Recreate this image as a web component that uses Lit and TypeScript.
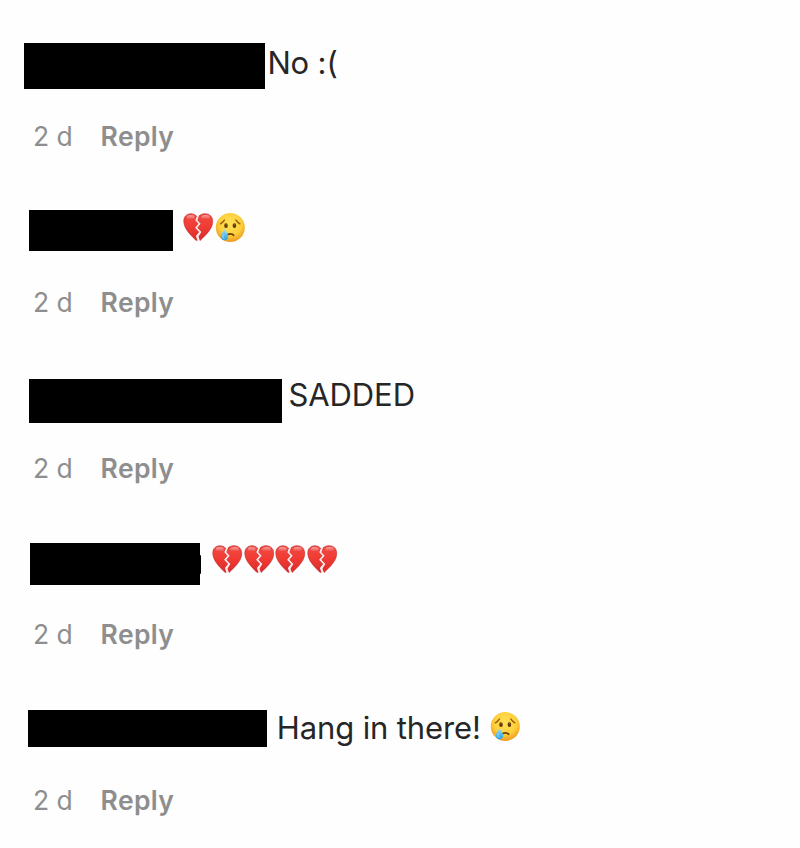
import { LitElement, html, css, svg } from "lit";
import { customElement, property } from "lit/decorators.js";

type Emoji = "heart" | "cry";

interface Comment {
  bar: { x: number; y: number; w: number; h: number };
  gap: number;
  text?: string;
  spacing?: number;
  emojis: Emoji[];
  nub?: boolean;
}

const comments: Comment[] = [
  { bar: { x: 24, y: 23, w: 241, h: 46 }, gap: 2.4, text: "No :(", spacing: -0.15, emojis: [] },
  { bar: { x: 29, y: 24.3, w: 144.3, h: 41 }, gap: 9.9, emojis: ["heart", "cry"] },
  { bar: { x: 29, y: 27, w: 252.5, h: 44.3 }, gap: 7, text: "SADDED", spacing: -0.1, emojis: [] },
  { bar: { x: 30, y: 24.5, w: 170, h: 42 }, gap: 12.1, emojis: ["heart", "heart", "heart", "heart"], nub: true },
  { bar: { x: 27.5, y: 25.6, w: 239.5, h: 37.2 }, gap: 9.8, text: "Hang in there!", spacing: -0.13, emojis: ["cry"] },
];

@customElement("emoji-icon")
export class EmojiIcon extends LitElement {
  @property() name: Emoji = "heart";

  static styles = css`
    :host { display: block; width: 31.7px; height: 32px; flex: none; }
    .icon { display: block; width: 32px; height: 32px; overflow: visible; }
  `;

  private heart() {
    return svg`
      <defs>
        <linearGradient id="red" x1="0" y1="0" x2="0" y2="1">
          <stop offset="0" stop-color="#ee4a45"/>
          <stop offset=".45" stop-color="#f23c34"/>
          <stop offset="1" stop-color="#da2b2a"/>
        </linearGradient>
        <linearGradient id="shine" x1="0" y1="0" x2="0" y2="1">
          <stop offset="0" stop-color="#fff" stop-opacity=".5"/>
          <stop offset="1" stop-color="#fff" stop-opacity="0"/>
        </linearGradient>
      </defs>
      <path d="M14 4.6C11.9 2.4 9.9 1.7 7.8 1.7C3.8 1.7.8 4.7.8 9C.8 16.2 6.3 21.6 12.8 28.3L14.3 28.3L13 24L16.2 20L12.2 15.8L15.6 11.8L12.4 8.2Z" fill="url(#red)" stroke="#bd2529" stroke-width=".6"/>
      <path d="M15.7 4.2C17.7 2.3 20 1.7 22.3 1.7C26.6 1.7 29.7 4.8 29.7 9.2C29.7 16.2 24.6 21.4 17.1 28.5L15.4 24.4L18.3 20L14.2 15.8L17.6 11.8L14.3 8.2Z" fill="url(#red)" stroke="#bd2529" stroke-width=".6"/>
      <path d="M13.8 4.4L12.4 8.2L15.6 11.8L12.2 15.8L16.2 20L13 24L14.6 28.8L16.6 28.8L15.4 24.4L18.3 20L14.2 15.8L17.6 11.8L14.3 8.2L15.9 4Z" fill="#f8e9e8"/>
      <ellipse cx="7.7" cy="5.4" rx="4" ry="2.3" fill="url(#shine)"/>
      <ellipse cx="22.6" cy="5.2" rx="4.2" ry="2.2" fill="url(#shine)"/>`;
  }

  private cry() {
    return svg`
      <defs>
        <radialGradient id="face" cx=".5" cy=".38" r=".64">
          <stop offset="0" stop-color="#ffe255"/>
          <stop offset=".6" stop-color="#fdd03c"/>
          <stop offset="1" stop-color="#ec9420"/>
        </radialGradient>
        <linearGradient id="tear" x1="0" y1="0" x2="0" y2="1">
          <stop offset="0" stop-color="#a4e4f8"/>
          <stop offset="1" stop-color="#229fe2"/>
        </linearGradient>
      </defs>
      <circle cx="15.3" cy="15.5" r="14.5" fill="url(#face)"/>
      <path d="M5.4 11.8C6.7 11 8.4 9.7 9.4 8.1M20.9 8.1C21.9 9.7 23.6 11 24.9 11.8" fill="none" stroke="#9c5c0e" stroke-width="1.4" stroke-linecap="round"/>
      <ellipse cx="11" cy="13.7" rx="1.8" ry="2.4" fill="#623a08"/>
      <ellipse cx="19.4" cy="13.7" rx="1.8" ry="2.4" fill="#623a08"/>
      <circle cx="11.1" cy="12.8" r=".5" fill="#b58845"/>
      <circle cx="19.5" cy="12.8" r=".5" fill="#b58845"/>
      <path d="M12 23.2C13.2 21.3 17.4 21.3 18.6 23.2" fill="none" stroke="#6c3c06" stroke-width="1.8" stroke-linecap="round"/>
      <path d="M9.6 16.7C8.9 19.1 5.8 21.7 5.8 24.6C5.8 26.9 7.3 28.3 9.5 28.3C11.8 28.3 13.2 26.8 13.2 24.6C13.2 21.8 10.2 19.1 9.6 16.7Z" fill="url(#tear)"/>
      <path d="M8.1 23.1C7.3 25.1 8 26.1 9 26.5" fill="none" stroke="#a8e3fc" stroke-width=".9" stroke-linecap="round"/>`;
  }

  render() {
    return html`<svg class="icon" viewBox="0 0 32 32">${this.name === "heart" ? this.heart() : this.cry()}</svg>`;
  }
}

@customElement("app-root")
export class AppRoot extends LitElement {
  static styles = css`
    :host {
      display: block;
      box-sizing: border-box;
      width: 800px;
      height: 848px;
      padding-top: 20px;
      overflow: hidden;
      background: #fefefe;
      font-family: Inter, "Liberation Sans", sans-serif;
    }
    .comment { height: 166px; }
    .line { display: flex; align-items: flex-start; height: 96px; }
    .bar { flex: none; background: #000; }
    .nub { flex: none; width: 1px; height: 19px; margin: 37px -1px 0 0; border-radius: 0 1px 1px 0; background: #000; }
    .body { display: flex; align-items: flex-start; }
    .text { margin-top: 23px; font-size: 31px; line-height: 40px; color: #262626; white-space: pre; }
    .emojis { display: flex; margin-top: 26px; }
    .text + .emojis { margin: 26.5px 0 0 9px; }
    .comment:last-child .text { margin-top: 24px; }
    .meta { display: flex; padding-left: 33px; font-size: 26.5px; line-height: 40px; color: #8e8e8e; }
    .age { width: 67.6px; flex: none; }
    .reply { font-weight: 600; letter-spacing: 0.35px; }
  `;

  render() {
    return comments.map(
      (c) => html`
        <div class="comment">
          <div class="line">
            <div class="bar" style="width:${c.bar.w}px;height:${c.bar.h}px;margin:${c.bar.y}px 0 0 ${c.bar.x}px"></div>
            ${c.nub ? html`<div class="nub"></div>` : ""}
            <div class="body" style="margin-left:${c.gap}px">
              ${c.text ? html`<span class="text" style="letter-spacing:${c.spacing}px">${c.text}</span>` : ""}
              ${c.emojis.length
                ? html`<span class="emojis">${c.emojis.map((e) => html`<emoji-icon name=${e}></emoji-icon>`)}</span>`
                : ""}
            </div>
          </div>
          <div class="meta"><span class="age">2 d</span><span class="reply">Reply</span></div>
        </div>
      `
    );
  }
}
